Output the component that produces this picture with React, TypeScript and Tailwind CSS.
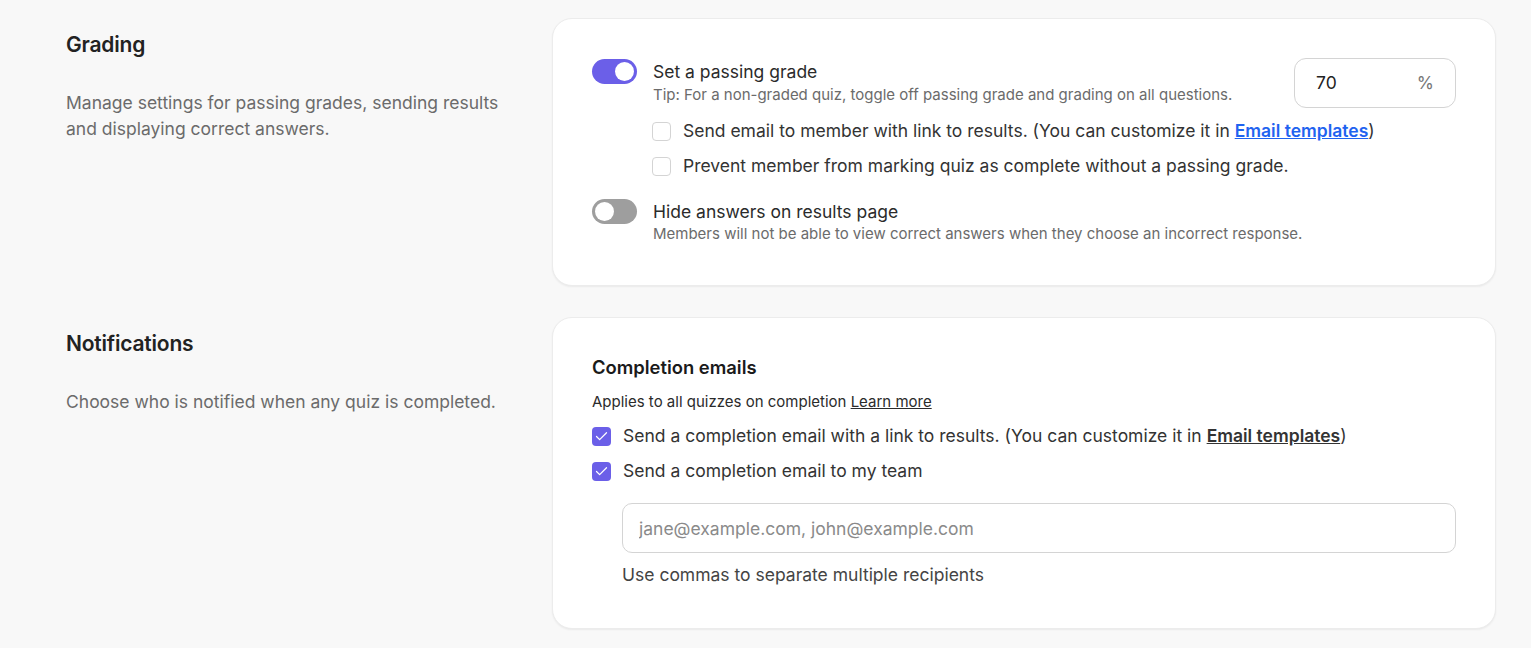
import { Check } from 'lucide-react';

const font = { fontFamily: 'Inter, "Noto Sans", sans-serif' };

function Toggle({ on }: { on: boolean }) {
  return (
    <div
      className={`flex h-[25px] w-[45px] shrink-0 items-center rounded-full px-[3px] ${
        on ? 'justify-end bg-[#6b5fe8]' : 'justify-start bg-[#9e9e9e]'
      }`}
    >
      <div className="h-[19px] w-[19px] rounded-full bg-white" />
    </div>
  );
}

function Checkbox({ checked }: { checked: boolean }) {
  return checked ? (
    <div className="flex h-[19px] w-[19px] shrink-0 items-center justify-center rounded-[4px] bg-[#6b5fe8]">
      <Check className="h-[15px] w-[15px] text-white" strokeWidth={2} />
    </div>
  ) : (
    <div className="h-[19px] w-[19px] shrink-0 rounded-[4px] border border-[#d4d4d4] bg-white" />
  );
}

function Section({
  title,
  description,
  children,
}: {
  title: string;
  description: React.ReactNode;
  children: React.ReactNode;
}) {
  return (
    <div className="flex">
      <div className="w-[552px] shrink-0 pl-[66px] pt-[12px]">
        <h2 className="text-[21px] font-semibold leading-[30px] tracking-[-0.2px] text-[#222]">{title}</h2>
        <p className="mt-[30px] w-[450px] text-[17.5px] leading-[26px] text-[#6b6b6b]">{description}</p>
      </div>
      <div className="w-[944px] shrink-0 rounded-[20px] border border-[#ececec] bg-white shadow-[0_1px_2px_rgba(0,0,0,0.06)]">
        {children}
      </div>
    </div>
  );
}

export default function App() {
  return (
    <div className="min-h-[648px] bg-[#f8f8f8] pt-[18px]" style={font}>
      <Section
        title="Grading"
        description="Manage settings for passing grades, sending results and displaying correct answers."
      >
        <div className="px-[39px] pb-[41px] pt-[39px]">
          <div className="flex items-start justify-between">
            <div className="mt-px flex gap-[16px]">
              <Toggle on />
              <div>
                <div className="text-[17.5px] leading-[26px] text-[#2b2b2b]">Set a passing grade</div>
                <div className="text-[15px] leading-[20px] text-[#6b6b6b]">
                  Tip: For a non-graded quiz, toggle off passing grade and grading on all questions.
                </div>
              </div>
            </div>
            <div className="flex h-[50px] w-[162px] shrink-0 items-center justify-between rounded-[12px] border border-[#d4d4d4] px-[21px]">
              <span className="text-[17.5px] text-[#222]">70</span>
              <span className="text-[17.5px] text-[#777]">%</span>
            </div>
          </div>
          <div className="ml-[60px] mt-[11px] flex flex-col gap-[11px]">
            <div className="flex items-center gap-[12px]">
              <Checkbox checked={false} />
              <span className="text-[17.5px] leading-[24px] text-[#333]">
                Send email to member with link to results. (You can customize it in{' '}
                <a className="font-semibold text-[#1f63f0] underline">Email templates</a>)
              </span>
            </div>
            <div className="flex items-center gap-[12px]">
              <Checkbox checked={false} />
              <span className="text-[17.5px] leading-[24px] text-[#333]">
                Prevent member from marking quiz as complete without a passing grade.
              </span>
            </div>
          </div>
          <div className="mt-[21px] flex gap-[16px]">
            <Toggle on={false} />
            <div>
              <div className="text-[17.5px] leading-[25px] text-[#2b2b2b]">Hide answers on results page</div>
              <div className="text-[15px] leading-[20px] text-[#6b6b6b]">
                Members will not be able to view correct answers when they choose an incorrect response.
              </div>
            </div>
          </div>
        </div>
      </Section>
      <div className="h-[31px]" />
      <Section title="Notifications" description="Choose who is notified when any quiz is completed.">
        <div className="px-[39px] pb-[41px] pt-[36px]">
          <h3 className="text-[18.4px] font-semibold leading-[26px] text-[#1a1a1a]">Completion emails</h3>
          <p className="mt-[12px] text-[15px] leading-[20px] text-[#2b2b2b]">
            Applies to all quizzes on completion <a className="underline">Learn more</a>
          </p>
          <div className="mt-[12px] flex flex-col gap-[11px]">
            <div className="flex items-center gap-[12px]">
              <Checkbox checked />
              <span className="text-[17.5px] leading-[24px] text-[#333]">
                Send a completion email with a link to results. (You can customize it in{' '}
                <a className="font-semibold underline">Email templates</a>)
              </span>
            </div>
            <div className="flex items-center gap-[12px]">
              <Checkbox checked />
              <span className="text-[17.5px] leading-[24px] text-[#333]">Send a completion email to my team</span>
            </div>
          </div>
          <div className="ml-[30px] mt-[20px]">
            <input
              className="h-[50px] w-full rounded-[10px] border border-[#d4d4d4] px-[16px] text-[17.5px] text-[#222] outline-none placeholder:text-[#8a8a8a]"
              placeholder="jane@example.com, john@example.com"
            />
            <p className="mt-[10px] text-[17.5px] leading-[24px] text-[#444]">Use commas to separate multiple recipients</p>
          </div>
        </div>
      </Section>
    </div>
  );
}
